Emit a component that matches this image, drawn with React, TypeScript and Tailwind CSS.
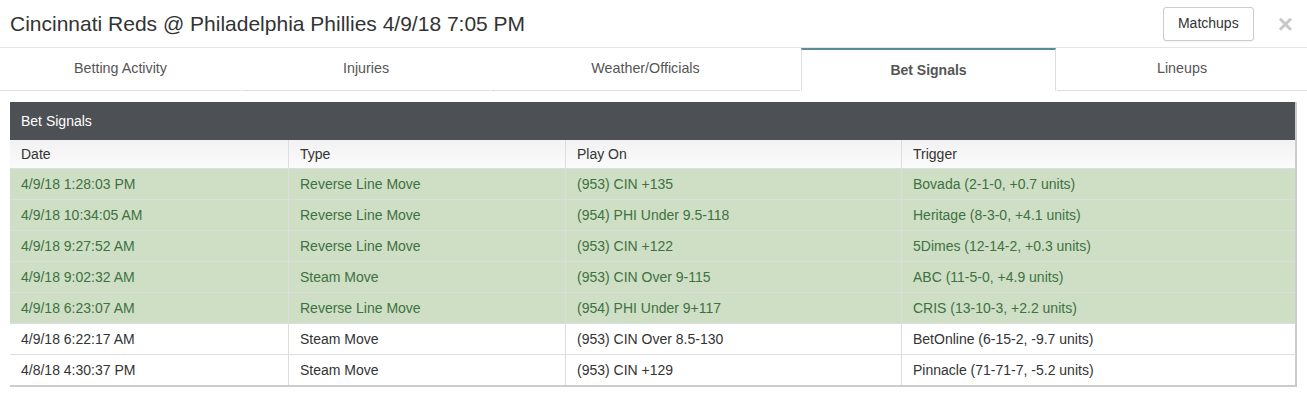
const tabs = [
  { label: 'Betting Activity', w: 'w-[241px]' },
  { label: 'Injuries', w: 'w-[248px]' },
  { label: 'Weather/Officials', w: 'w-[309px]' },
  { label: 'Bet Signals', w: 'w-[255px]', active: true },
  { label: 'Lineups', w: 'flex-1' },
]

const rows = [
  { date: '4/9/18 1:28:03 PM', type: 'Reverse Line Move', play: '(953) CIN +135', trigger: 'Bovada (2-1-0, +0.7 units)', hit: true },
  { date: '4/9/18 10:34:05 AM', type: 'Reverse Line Move', play: '(954) PHI Under 9.5-118', trigger: 'Heritage (8-3-0, +4.1 units)', hit: true },
  { date: '4/9/18 9:27:52 AM', type: 'Reverse Line Move', play: '(953) CIN +122', trigger: '5Dimes (12-14-2, +0.3 units)', hit: true },
  { date: '4/9/18 9:02:32 AM', type: 'Steam Move', play: '(953) CIN Over 9-115', trigger: 'ABC (11-5-0, +4.9 units)', hit: true },
  { date: '4/9/18 6:23:07 AM', type: 'Reverse Line Move', play: '(954) PHI Under 9+117', trigger: 'CRIS (13-10-3, +2.2 units)', hit: true },
  { date: '4/9/18 6:22:17 AM', type: 'Steam Move', play: '(953) CIN Over 8.5-130', trigger: 'BetOnline (6-15-2, -9.7 units)', hit: false },
  { date: '4/8/18 4:30:37 PM', type: 'Steam Move', play: '(953) CIN +129', trigger: 'Pinnacle (71-71-7, -5.2 units)', hit: false },
]

const App = () => {
  return (
    <div className="h-[400px] w-[1307px] bg-white font-['Liberation_Sans',Arial,sans-serif] text-[#333]">
      <div className="flex h-[48px] items-center justify-between border-b border-[#e5e5e5] pl-[10px] pr-[14px]">
        <h1 className="text-[21px] leading-none text-[#333]">Cincinnati Reds @ Philadelphia Phillies 4/9/18 7:05 PM</h1>
        <div className="flex items-center gap-[24px]">
          <button className="h-[34px] w-[91px] rounded-[3px] border border-[#ccc] bg-white text-[14px] text-[#333] shadow-[0_1px_1px_rgba(0,0,0,0.05)]">
            Matchups
          </button>
          <span className="text-[26px] font-bold leading-none text-[#c8c8c8]">×</span>
        </div>
      </div>

      <div className="flex h-[43px] gap-px">
        {tabs.map((t) =>
          t.active ? (
            <div
              key={t.label}
              className={`${t.w} flex items-center justify-center border-x border-t-2 border-x-[#ddd] border-t-[#5b8a9c] bg-white text-[14px] font-bold text-[#555]`}
            >
              {t.label}
            </div>
          ) : (
            <div
              key={t.label}
              className={`${t.w} flex items-center justify-center border-b border-[#ddd] text-[14.3px] text-[#555]`}
            >
              {t.label}
            </div>
          ),
        )}
      </div>

      <div className="mx-[10px] mt-[11px] border-r-2 border-b-2 border-[#ccc]">
        <div className="flex h-[38px] items-center bg-[#4d5055] px-[11px] text-[14px] text-white">Bet Signals</div>
        <div className="grid grid-cols-[278px_277px_336px_1fr] text-[14px]">
          {['Date', 'Type', 'Play On', 'Trigger'].map((h, i) => (
            <div
              key={h}
              className={`flex h-[28px] items-center bg-gradient-to-b from-[#f2f2f2] to-[#fbfbfb] px-[11px] text-[#333] ${i > 0 ? 'border-l border-[#ddd]' : ''}`}
            >
              {h}
            </div>
          ))}
          {rows.map((r, ri) =>
            [r.date, r.type, r.play, r.trigger].map((c, i) => (
              <div
                key={`${ri}-${i}`}
                className={`flex h-[31px] items-center border-t border-[#ddd] px-[11px] pt-px text-[14px] ${
                  r.hit ? 'bg-[#cedfc6] text-[#3f7140]' : 'bg-white text-[#333]'
                } ${i > 0 ? 'border-l' : ''}`}
              >
                {c}
              </div>
            )),
          )}
        </div>
      </div>
    </div>
  )
}

export default App
